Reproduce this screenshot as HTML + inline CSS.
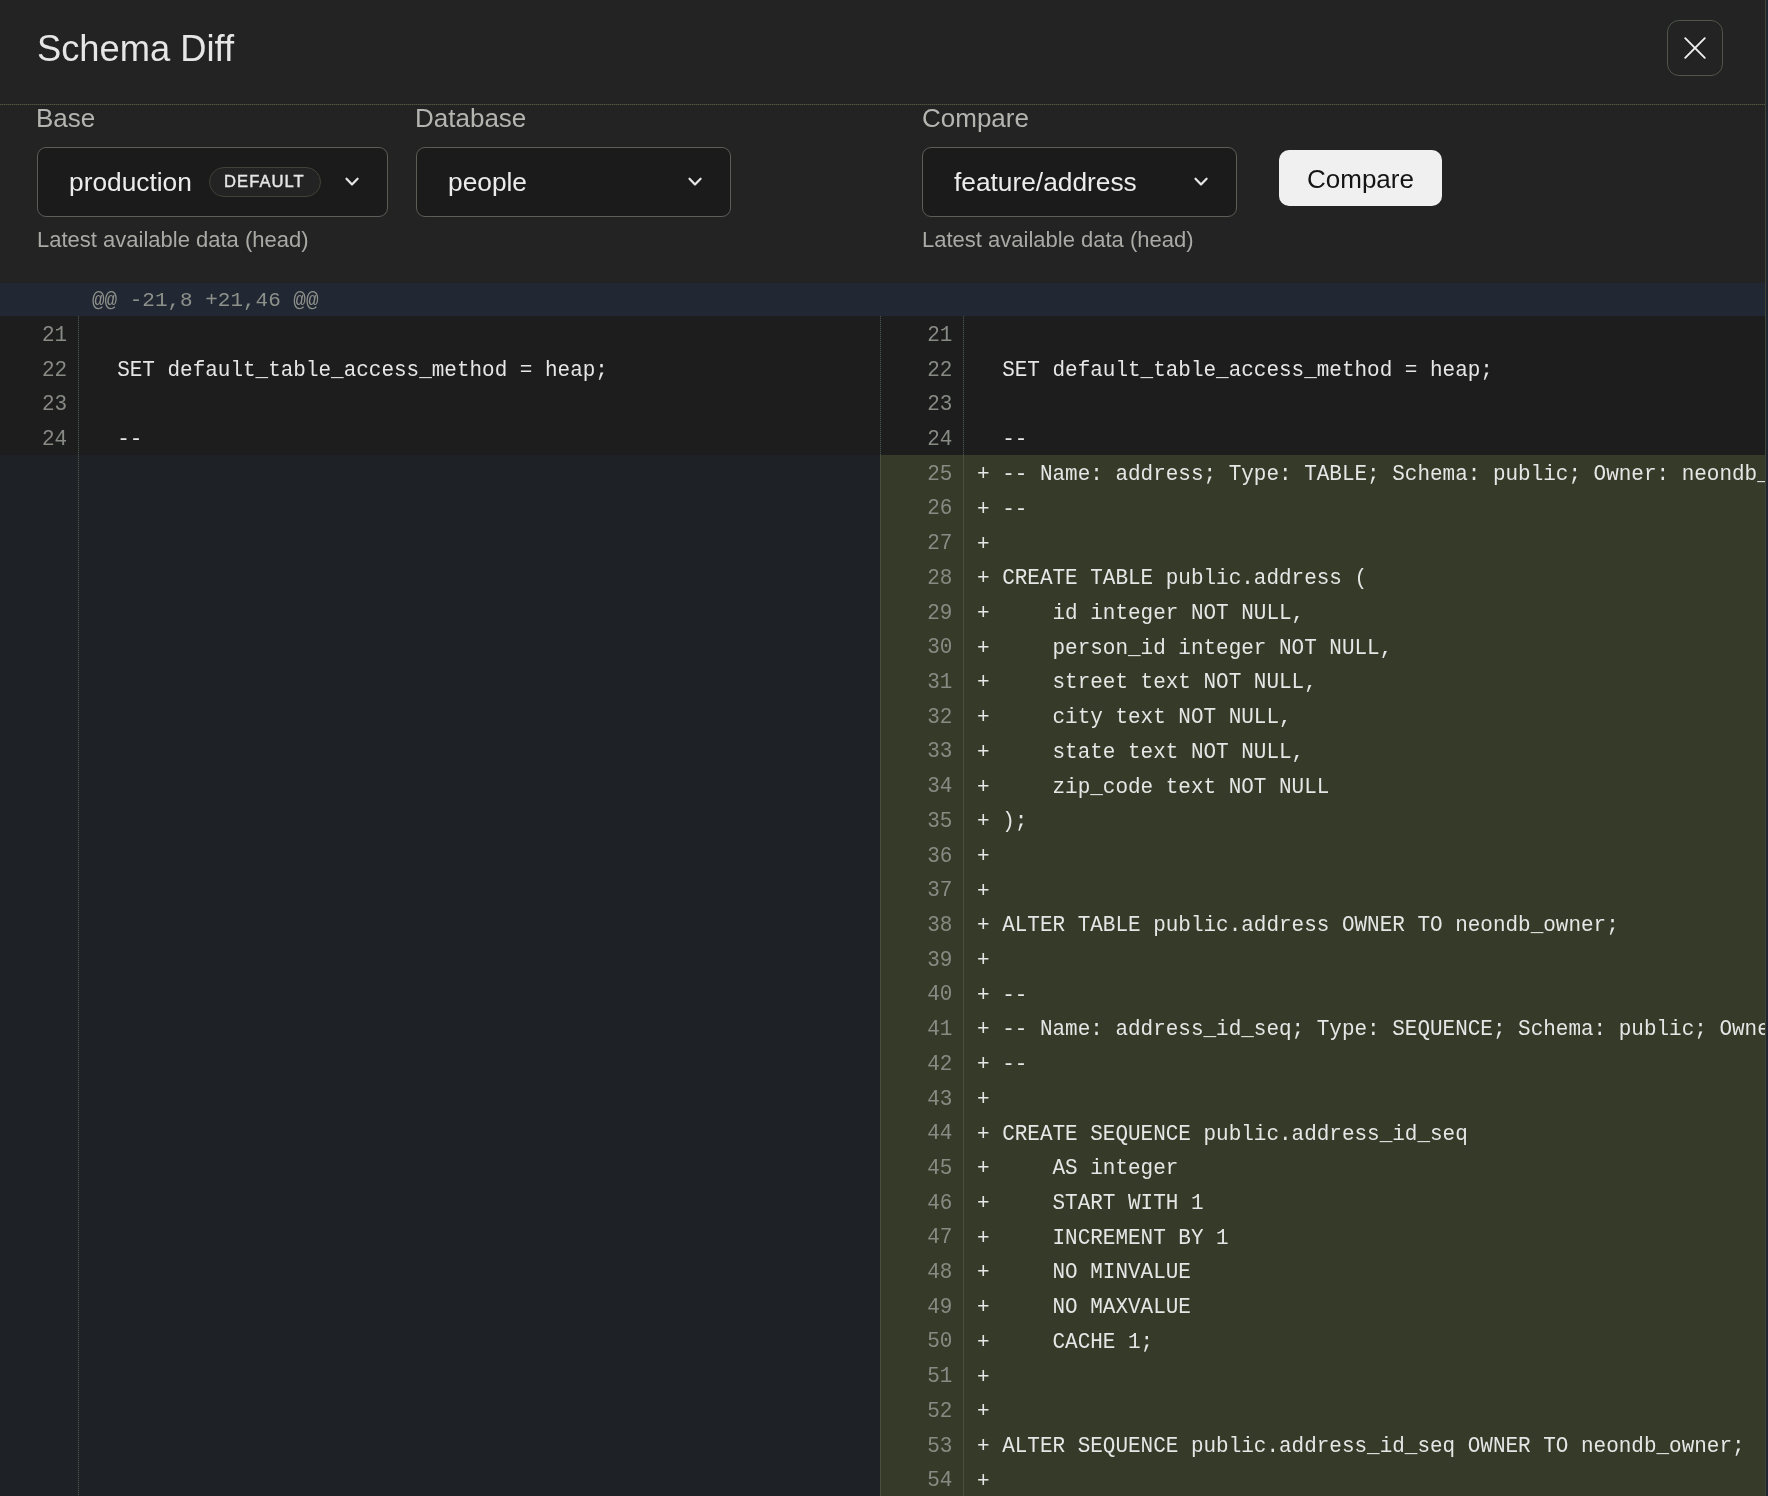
<!DOCTYPE html>
<html><head><meta charset="utf-8">
<style>
html,body{margin:0;padding:0;}
body{width:1768px;height:1496px;overflow:hidden;background:#1f2430;position:relative;font-family:"Liberation Sans",sans-serif;}
.modal{position:absolute;left:0;top:0;width:1765px;height:1496px;background:#232323;border-right:1px solid #3e4636;overflow:hidden;}
.abs{position:absolute;white-space:pre;will-change:transform;}
.title{left:37px;top:27.2px;font-size:36.3px;line-height:44px;color:#e6e6e6;}
.hdr-line{left:0;top:104px;width:1765px;height:1px;background:repeating-linear-gradient(to right,#4c5444 0 1px,#383d2c 1px 2px);}
.close{left:1667px;top:20px;width:54px;height:54px;border:1px solid #50574a;border-radius:12px;}
.lbl{font-size:26px;line-height:30px;color:#b4b4b0;top:103.4px;}
.sel{top:147px;height:68px;border:1px solid #5b5e57;border-radius:9px;background:#1b1b1b;}
.seltxt{font-size:26.3px;line-height:30px;color:#ececec;top:166.6px;}
.sub{font-size:22px;line-height:26px;color:#a9a9a5;top:226.7px;}
.pill{left:209px;top:167px;width:110px;height:28px;border:1px solid #3e4438;border-radius:15px;background:#232323;}
.pilltxt{font-size:16.6px;color:#e6e6e6;-webkit-text-stroke:0.4px #e6e6e6;line-height:22px;top:171.3px;left:224.2px;letter-spacing:1.05px;}
.btn{left:1279px;top:150px;width:163px;height:56px;background:#f0f0f0;border-radius:10px;}
.btntxt{left:1307px;top:164px;font-size:26px;line-height:30px;color:#141414;}
.dhdr{left:0;top:283px;width:1765px;height:33px;background:#212733;}
.mono{font-family:"Liberation Mono",monospace;font-size:20.98px;}
.dhtxt{left:92.2px;top:286px;line-height:30px;color:#8e918a;}
.rows{left:0;top:315.8px;width:1765px;height:1200px;}
.lpane{position:absolute;left:0;top:0;width:880px;height:1200px;background:#1e2126;}
.rpane{position:absolute;left:881px;top:0;width:884px;height:1200px;background:#1e2126;}
.vdiv{position:absolute;left:880px;top:0;width:1px;height:1200px;background:linear-gradient(to bottom,transparent 0 139px,#47503f 139px),repeating-linear-gradient(to bottom,#4a5242 0 1px,#262b36 1px 2px);}
.row{position:absolute;left:0;height:34.71px;}
.lrow{width:880px;background:#1d1d1d;}
.rrow{width:884px;background:#1d1d1d;}
.add{background:#363a28;}
.ln{position:absolute;top:2.9px;color:#878b84;transform:scaleY(1.05);will-change:transform;transform-origin:0 22.9px;text-align:right;line-height:34.71px;}
.code{position:absolute;top:3.3px;transform:scaleY(1.05);will-change:transform;transform-origin:0 22.9px;color:#e6e6e6;line-height:34.71px;white-space:pre;}
.gl{position:absolute;top:0;width:1px;height:1200px;background:repeating-linear-gradient(to bottom,#4a5242 0 1px,#262b36 1px 2px);}
.glr{background:linear-gradient(to bottom,transparent 0 139px,#47503f 139px),repeating-linear-gradient(to bottom,#4a5242 0 1px,#262b36 1px 2px);}
</style></head>
<body>
<div class="modal">
  <div class="abs title">Schema Diff</div>
  <div class="abs close"></div>
  <svg class="abs" style="left:1667px;top:20px" width="56" height="56" viewBox="0 0 56 56"><path d="M18.2 18.2 L37.8 37.8 M37.8 18.2 L18.2 37.8" stroke="#f0f0f0" stroke-width="1.9" stroke-linecap="round"/></svg>
  <div class="abs hdr-line"></div>

  <div class="abs lbl" style="left:36.2px">Base</div>
  <div class="abs lbl" style="left:414.8px">Database</div>
  <div class="abs lbl" style="left:922px">Compare</div>

  <div class="abs sel" style="left:37px;width:349px"></div>
  <div class="abs seltxt" style="left:69px">production</div>
  <div class="abs pill"></div>
  <div class="abs pilltxt">DEFAULT</div>
  <svg class="abs" style="left:343px;top:174px" width="18" height="16" viewBox="0 0 18 16"><path d="M3.5 4.7 L9 10.4 L14.6 4.7" fill="none" stroke="#e8e8e8" stroke-width="2.2" stroke-linecap="round" stroke-linejoin="round"/></svg>

  <div class="abs sel" style="left:416px;width:313px"></div>
  <div class="abs seltxt" style="left:448px">people</div>
  <svg class="abs" style="left:686px;top:174px" width="18" height="16" viewBox="0 0 18 16"><path d="M3.5 4.7 L9 10.4 L14.6 4.7" fill="none" stroke="#e8e8e8" stroke-width="2.2" stroke-linecap="round" stroke-linejoin="round"/></svg>

  <div class="abs sel" style="left:922px;width:313px"></div>
  <div class="abs seltxt" style="left:954px">feature/address</div>
  <svg class="abs" style="left:1192px;top:174px" width="18" height="16" viewBox="0 0 18 16"><path d="M3.5 4.7 L9 10.4 L14.6 4.7" fill="none" stroke="#e8e8e8" stroke-width="2.2" stroke-linecap="round" stroke-linejoin="round"/></svg>

  <div class="abs btn"></div>
  <div class="abs btntxt">Compare</div>

  <div class="abs sub" style="left:37px">Latest available data (head)</div>
  <div class="abs sub" style="left:922px">Latest available data (head)</div>

  <div class="abs dhdr"></div>
  <div class="abs mono dhtxt">@@ -21,8 +21,46 @@</div>

  <div class="abs rows" id="rows">
<div class="lpane">
<div class="row lrow" style="top:0.00px"><div class="ln mono" style="left:0;width:67.1px">21</div><div class="code mono" style="left:91.8px">  </div></div>
<div class="row lrow" style="top:34.71px"><div class="ln mono" style="left:0;width:67.1px">22</div><div class="code mono" style="left:91.8px">  SET default_table_access_method = heap;</div></div>
<div class="row lrow" style="top:69.42px"><div class="ln mono" style="left:0;width:67.1px">23</div><div class="code mono" style="left:91.8px">  </div></div>
<div class="row lrow" style="top:104.13px"><div class="ln mono" style="left:0;width:67.1px">24</div><div class="code mono" style="left:91.8px">  --</div></div>
<div class="gl" style="left:78px"></div>
</div>
<div class="vdiv"></div>
<div class="rpane">
<div class="row rrow" style="top:0.00px"><div class="ln mono" style="left:0;width:71.3px">21</div><div class="code mono" style="left:96.0px">  </div></div>
<div class="row rrow" style="top:34.71px"><div class="ln mono" style="left:0;width:71.3px">22</div><div class="code mono" style="left:96.0px">  SET default_table_access_method = heap;</div></div>
<div class="row rrow" style="top:69.42px"><div class="ln mono" style="left:0;width:71.3px">23</div><div class="code mono" style="left:96.0px">  </div></div>
<div class="row rrow" style="top:104.13px"><div class="ln mono" style="left:0;width:71.3px">24</div><div class="code mono" style="left:96.0px">  --</div></div>
<div class="row rrow add" style="top:138.84px"><div class="ln mono" style="left:0;width:71.3px">25</div><div class="code mono" style="left:96.0px">+ -- Name: address; Type: TABLE; Schema: public; Owner: neondb_owner</div></div>
<div class="row rrow add" style="top:173.55px"><div class="ln mono" style="left:0;width:71.3px">26</div><div class="code mono" style="left:96.0px">+ --</div></div>
<div class="row rrow add" style="top:208.26px"><div class="ln mono" style="left:0;width:71.3px">27</div><div class="code mono" style="left:96.0px">+ </div></div>
<div class="row rrow add" style="top:242.97px"><div class="ln mono" style="left:0;width:71.3px">28</div><div class="code mono" style="left:96.0px">+ CREATE TABLE public.address (</div></div>
<div class="row rrow add" style="top:277.68px"><div class="ln mono" style="left:0;width:71.3px">29</div><div class="code mono" style="left:96.0px">+     id integer NOT NULL,</div></div>
<div class="row rrow add" style="top:312.39px"><div class="ln mono" style="left:0;width:71.3px">30</div><div class="code mono" style="left:96.0px">+     person_id integer NOT NULL,</div></div>
<div class="row rrow add" style="top:347.10px"><div class="ln mono" style="left:0;width:71.3px">31</div><div class="code mono" style="left:96.0px">+     street text NOT NULL,</div></div>
<div class="row rrow add" style="top:381.81px"><div class="ln mono" style="left:0;width:71.3px">32</div><div class="code mono" style="left:96.0px">+     city text NOT NULL,</div></div>
<div class="row rrow add" style="top:416.52px"><div class="ln mono" style="left:0;width:71.3px">33</div><div class="code mono" style="left:96.0px">+     state text NOT NULL,</div></div>
<div class="row rrow add" style="top:451.23px"><div class="ln mono" style="left:0;width:71.3px">34</div><div class="code mono" style="left:96.0px">+     zip_code text NOT NULL</div></div>
<div class="row rrow add" style="top:485.94px"><div class="ln mono" style="left:0;width:71.3px">35</div><div class="code mono" style="left:96.0px">+ );</div></div>
<div class="row rrow add" style="top:520.65px"><div class="ln mono" style="left:0;width:71.3px">36</div><div class="code mono" style="left:96.0px">+ </div></div>
<div class="row rrow add" style="top:555.36px"><div class="ln mono" style="left:0;width:71.3px">37</div><div class="code mono" style="left:96.0px">+ </div></div>
<div class="row rrow add" style="top:590.07px"><div class="ln mono" style="left:0;width:71.3px">38</div><div class="code mono" style="left:96.0px">+ ALTER TABLE public.address OWNER TO neondb_owner;</div></div>
<div class="row rrow add" style="top:624.78px"><div class="ln mono" style="left:0;width:71.3px">39</div><div class="code mono" style="left:96.0px">+ </div></div>
<div class="row rrow add" style="top:659.49px"><div class="ln mono" style="left:0;width:71.3px">40</div><div class="code mono" style="left:96.0px">+ --</div></div>
<div class="row rrow add" style="top:694.20px"><div class="ln mono" style="left:0;width:71.3px">41</div><div class="code mono" style="left:96.0px">+ -- Name: address_id_seq; Type: SEQUENCE; Schema: public; Owner: neondb_owner</div></div>
<div class="row rrow add" style="top:728.91px"><div class="ln mono" style="left:0;width:71.3px">42</div><div class="code mono" style="left:96.0px">+ --</div></div>
<div class="row rrow add" style="top:763.62px"><div class="ln mono" style="left:0;width:71.3px">43</div><div class="code mono" style="left:96.0px">+ </div></div>
<div class="row rrow add" style="top:798.33px"><div class="ln mono" style="left:0;width:71.3px">44</div><div class="code mono" style="left:96.0px">+ CREATE SEQUENCE public.address_id_seq</div></div>
<div class="row rrow add" style="top:833.04px"><div class="ln mono" style="left:0;width:71.3px">45</div><div class="code mono" style="left:96.0px">+     AS integer</div></div>
<div class="row rrow add" style="top:867.75px"><div class="ln mono" style="left:0;width:71.3px">46</div><div class="code mono" style="left:96.0px">+     START WITH 1</div></div>
<div class="row rrow add" style="top:902.46px"><div class="ln mono" style="left:0;width:71.3px">47</div><div class="code mono" style="left:96.0px">+     INCREMENT BY 1</div></div>
<div class="row rrow add" style="top:937.17px"><div class="ln mono" style="left:0;width:71.3px">48</div><div class="code mono" style="left:96.0px">+     NO MINVALUE</div></div>
<div class="row rrow add" style="top:971.88px"><div class="ln mono" style="left:0;width:71.3px">49</div><div class="code mono" style="left:96.0px">+     NO MAXVALUE</div></div>
<div class="row rrow add" style="top:1006.59px"><div class="ln mono" style="left:0;width:71.3px">50</div><div class="code mono" style="left:96.0px">+     CACHE 1;</div></div>
<div class="row rrow add" style="top:1041.30px"><div class="ln mono" style="left:0;width:71.3px">51</div><div class="code mono" style="left:96.0px">+ </div></div>
<div class="row rrow add" style="top:1076.01px"><div class="ln mono" style="left:0;width:71.3px">52</div><div class="code mono" style="left:96.0px">+ </div></div>
<div class="row rrow add" style="top:1110.72px"><div class="ln mono" style="left:0;width:71.3px">53</div><div class="code mono" style="left:96.0px">+ ALTER SEQUENCE public.address_id_seq OWNER TO neondb_owner;</div></div>
<div class="row rrow add" style="top:1145.43px"><div class="ln mono" style="left:0;width:71.3px">54</div><div class="code mono" style="left:96.0px">+ </div></div>
<div class="gl glr" style="left:82px"></div>
</div>
  </div>
</div>
</body></html>
